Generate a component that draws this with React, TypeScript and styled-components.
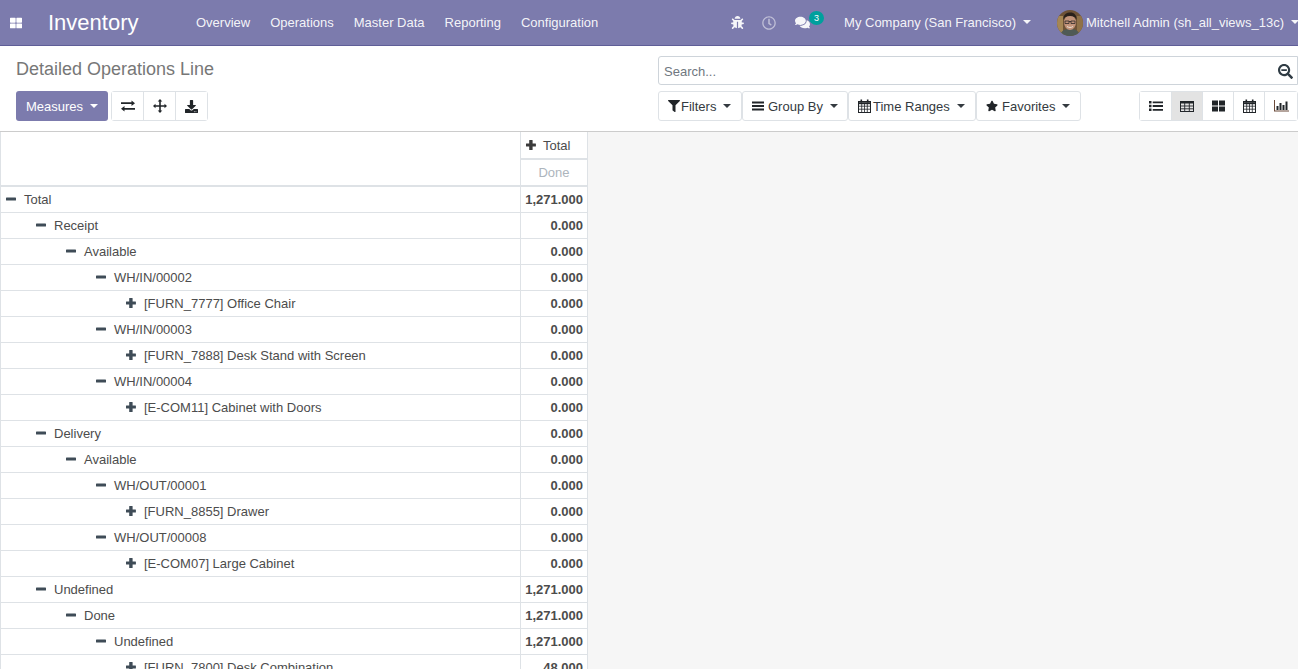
import { createGlobalStyle, styled } from "styled-components";
import type { ReactNode } from "react";
import {
  FaBug,
  FaComments,
  FaDownload,
  FaFilter,
  FaRegClock,
  FaSearchMinus,
  FaStar,
  FaThLarge,
} from "react-icons/fa";

const GlobalStyle = createGlobalStyle`
  html, body {
    margin: 0;
    height: 100%;
    overflow: hidden;
  }
  body {
    font-family: "Liberation Sans", Arial, sans-serif;
    font-size: 13px;
    color: #4c4c4c;
    background: #f6f6f6;
  }
`;

const Page = styled.div`
  display: flex;
  flex-direction: column;
  height: 669px;
  overflow: hidden;
`;

const Navbar = styled.header`
  display: flex;
  align-items: center;
  height: 45px;
  flex: none;
  background: #7c7bad;
  border-bottom: 1px solid #5f5e97;
  color: #fff;
  white-space: nowrap;
`;

const AppsToggle = styled.span`
  display: flex;
  width: 48px;
  padding-left: 10px;
  box-sizing: border-box;
  font-size: 12px;
`;

const Brand = styled.span`
  font-size: 22px;
  width: 148px;
`;

const Menu = styled.nav`
  display: flex;
  gap: 20px;
  flex: 1;
  color: rgba(255, 255, 255, 0.93);
`;

const Systray = styled.div`
  display: flex;
  align-items: center;
  color: rgba(255, 255, 255, 0.93);
`;

const TrayIcon = styled.span<{ $muted?: boolean; $gap: number; $size: number }>`
  display: flex;
  font-size: ${(p) => p.$size}px;
  margin-right: ${(p) => p.$gap}px;
  opacity: ${(p) => (p.$muted ? 0.55 : 1)};
`;

const ChatIcon = styled.span`
  position: relative;
  display: flex;
  font-size: 15px;
  margin-right: 34px;
`;

const Badge = styled.span`
  position: absolute;
  left: 14px;
  top: -4px;
  width: 15px;
  height: 14px;
  border-radius: 50%;
  background: #00a09d;
  color: #fff;
  font-size: 9px;
  line-height: 14px;
  text-align: center;
`;

const Caret = styled.span`
  display: inline-block;
  margin-left: 7px;
  vertical-align: 3px;
  border-top: 4px solid currentColor;
  border-left: 4px solid transparent;
  border-right: 4px solid transparent;
`;

const Company = styled.span`
  margin-right: 26px;
`;

const User = styled.span`
  display: flex;
  align-items: center;
  gap: 3px;
  margin-right: -1px;
`;

const Avatar = styled.svg`
  width: 26px;
  height: 26px;
  flex: none;
`;

const ControlPanel = styled.section`
  display: grid;
  grid-template-columns: 658px 640px;
  grid-template-rows: 35px 40px;
  height: 86px;
  flex: none;
  box-sizing: border-box;
  padding-top: 10px;
  background: #fff;
  border-bottom: 1px solid #cccccc;
`;

const Breadcrumb = styled.h1`
  margin: 0;
  padding: 3px 0 0 16px;
  font-size: 18px;
  line-height: 20px;
  font-weight: 400;
  color: #777777;
`;

const SearchBox = styled.div`
  display: flex;
  align-items: center;
  justify-content: space-between;
  height: 29px;
  box-sizing: border-box;
  padding: 2px 4px 0 5px;
  border: 1px solid #ced4da;
  border-radius: 3px 0 0 3px;
  color: #6f7780;
`;

const SearchIcon = styled.span`
  display: flex;
  font-size: 15px;
  color: #2f3b44;
`;

const LeftTools = styled.div`
  display: flex;
  align-items: flex-start;
  padding-left: 16px;
`;

const PrimaryButton = styled.button`
  height: 30px;
  width: 92px;
  margin-right: 3px;
  padding: 0;
  border: 0;
  border-radius: 3px;
  background: #7c7bad;
  color: #fff;
  font: inherit;
`;

const ButtonGroup = styled.div`
  display: flex;
  height: 30px;
  box-sizing: border-box;
  border: 1px solid #dee2e6;
  border-radius: 3px;
`;

const IconButton = styled.span<{ $active?: boolean; $size?: number }>`
  display: flex;
  align-items: center;
  justify-content: center;
  width: 31px;
  font-size: ${(p) => p.$size ?? 13}px;
  color: #212529;
  background: ${(p) => (p.$active ? "#e3e3e3" : "#fff")};
  & + & {
    border-left: 1px solid #dee2e6;
  }
`;

const ViewButton = styled(IconButton)`
  width: 30px;
  &:first-child {
    width: 31px;
  }
  &:last-child {
    width: 32px;
  }
`;

const RightTools = styled.div`
  display: flex;
  align-items: flex-start;
  justify-content: space-between;
`;

const Filters = styled.div`
  display: flex;
`;

const FilterButton = styled.span<{ $width: number }>`
  display: flex;
  align-items: center;
  width: ${(p) => p.$width}px;
  height: 30px;
  box-sizing: border-box;
  padding-left: 9px;
  border: 1px solid #dee2e6;
  border-radius: 3px;
  color: #343a40;
  background: #fff;
  white-space: nowrap;
`;

const FilterIcon = styled.span<{ $slot: number }>`
  display: flex;
  flex: none;
  width: ${(p) => p.$slot}px;
  font-size: 12px;
  color: #212529;
`;

const TableArea = styled.main`
  flex: 1;
  overflow: hidden;
`;

const Pivot = styled.table`
  border-collapse: collapse;
  table-layout: fixed;
  width: 587px;
  background: #fff;
`;

const Cell = styled.td`
  height: 26px;
  padding: 0 4px;
  border: 1px solid #dee2e6;
  line-height: 15px;
  box-sizing: border-box;
`;

const HeadBlank = styled(Cell).attrs({ as: "th" })`
  border-top: 0;
  border-bottom-width: 2px;
`;

const HeadTotal = styled(Cell).attrs({ as: "th" })`
  height: 27px;
  font-weight: 400;
  text-align: left;
  border-top: 0;
  border-bottom-width: 2px;
`;

const HeadMeasure = styled(HeadTotal)`
  text-align: center;
  color: #adb5bd;
`;

const LabelCell = styled(Cell)<{ $depth: number }>`
  padding-left: ${(p) => 4 + p.$depth * 30}px;
`;

const ValueCell = styled(Cell)`
  text-align: right;
  font-weight: 700;
`;

const Toggle = styled.span`
  display: inline-flex;
  width: 19px;
  color: #3f4c57;
  vertical-align: -1px;
`;

const HeadToggle = styled(Toggle)`
  width: 18px;
  color: #3b3b3b;
`;

const PlusIcon = () => (
  <svg width="12" height="12" viewBox="0 0 12 12" fill="currentColor">
    <path d="M4.500 1h2.800a.3.3 0 0 1 .3.3v3.100h2.900a.4.4 0 0 1 .4.400v2.400a.4.4 0 0 1-.4.400H7.600v3.100a.3.300 0 0 1-.3.300H4.500a.3.300 0 0 1-.3-.3V7.600H1.400a.4.400 0 0 1-.4-.4V4.800a.4.400 0 0 1 .4-.4h2.800V1.300a.3.300 0 0 1 .3-.3z" />
  </svg>
);

const MinusIcon = () => (
  <svg width="12" height="12" viewBox="0 0 12 12" fill="currentColor">
    <rect x="1" y="4.500" width="10" height="3" rx="0.6" />
  </svg>
);

const BarsIcon = () => (
  <svg width="12" height="12" viewBox="0 0 12 12" fill="currentColor">
    <path d="M0 1.500h12v2H0zM0 5h12v2H0zM0 8.500h12v2H0z" />
  </svg>
);

const ListIcon = () => (
  <svg width="14" height="12" viewBox="0 0 14 12" fill="currentColor">
    <path d="M0 1h2.500v2.500H0zM0 4.800h2.500v2.500H0zM0 8.600h2.500v2.500H0zM3.700 1.400H14v1.900H3.700zM3.700 5.100H14V7H3.700zM3.700 8.900H14v1.900H3.700z" />
  </svg>
);

const TableIcon = () => (
  <svg width="14" height="12" viewBox="0 0 14 12" fill="none" stroke="currentColor">
    <rect x="0.500" y="1.500" width="13" height="10" strokeWidth="1" />
    <path d="M0 2.500h14" strokeWidth="2" />
    <path d="M0 6h14M0 8.800h14M4.700 3v8M9.300 3v8" strokeWidth="0.9" />
  </svg>
);

const GridIcon = () => (
  <svg width="13" height="12" viewBox="0 0 13 12" fill="currentColor">
    <path d="M0 .5h6v5H0zM7 .5h6v5H7zM0 6.500h6v5H0zM7 6.500h6v5H7z" />
  </svg>
);

const CalendarIcon = () => (
  <svg width="13" height="14" viewBox="0 0 13 14" fill="none" stroke="currentColor">
    <rect x="0.500" y="2.500" width="12" height="11" strokeWidth="1" />
    <path d="M0 4.200h13" strokeWidth="2" />
    <path d="M0 7.200h13M0 10.200h13M3.700 5v8M6.500 5v8M9.300 5v8" strokeWidth="0.8" />
    <path d="M3.300.500v3M9.700.500v3" strokeWidth="1.600" />
  </svg>
);

const ChartIcon = () => (
  <svg width="15" height="12" viewBox="0 0 15 12" fill="currentColor">
    <path d="M0 0h1v10.500h15v1H0z" fill="#6b4a3a" />
    <path d="M2.500 6h2v4h-2zM5.500 3h2v7h-2zM8.500 5h2v5h-2zM11.500 1.500h2V10h-2z" />
  </svg>
);

const ExchangeIcon = () => (
  <svg width="14" height="12" viewBox="0 0 14 12" fill="currentColor">
    <path d="M0 2.300h10.500V.5L14 3.200l-3.500 2.700V4.100H0zM14 7.900H3.500V6.100L0 8.800l3.500 2.700V9.700H14z" />
  </svg>
);

const MoveIcon = () => (
  <svg width="14" height="14" viewBox="0 0 14 14" fill="currentColor">
    <path d="M7 0l2.300 2.500H7.800v3.700h3.700V4.700L14 7l-2.500 2.300V7.800H7.800v3.700h1.500L7 14l-2.300-2.500h1.500V7.800H2.500v1.500L0 7l2.500-2.300v1.500h3.700V2.500H4.700z" />
  </svg>
);

type Row = { depth: number; open: boolean; label: string; value: string };

const rows: Row[] = [
  { depth: 0, open: true, label: "Total", value: "1,271.000" },
  { depth: 1, open: true, label: "Receipt", value: "0.000" },
  { depth: 2, open: true, label: "Available", value: "0.000" },
  { depth: 3, open: true, label: "WH/IN/00002", value: "0.000" },
  { depth: 4, open: false, label: "[FURN_7777] Office Chair", value: "0.000" },
  { depth: 3, open: true, label: "WH/IN/00003", value: "0.000" },
  { depth: 4, open: false, label: "[FURN_7888] Desk Stand with Screen", value: "0.000" },
  { depth: 3, open: true, label: "WH/IN/00004", value: "0.000" },
  { depth: 4, open: false, label: "[E-COM11] Cabinet with Doors", value: "0.000" },
  { depth: 1, open: true, label: "Delivery", value: "0.000" },
  { depth: 2, open: true, label: "Available", value: "0.000" },
  { depth: 3, open: true, label: "WH/OUT/00001", value: "0.000" },
  { depth: 4, open: false, label: "[FURN_8855] Drawer", value: "0.000" },
  { depth: 3, open: true, label: "WH/OUT/00008", value: "0.000" },
  { depth: 4, open: false, label: "[E-COM07] Large Cabinet", value: "0.000" },
  { depth: 1, open: true, label: "Undefined", value: "1,271.000" },
  { depth: 2, open: true, label: "Done", value: "1,271.000" },
  { depth: 3, open: true, label: "Undefined", value: "1,271.000" },
  { depth: 4, open: false, label: "[FURN_7800] Desk Combination", value: "48.000" },
];

const menuItems = ["Overview", "Operations", "Master Data", "Reporting", "Configuration"];

function Filter({ width, slot, icon, label }: { width: number; slot: number; icon: ReactNode; label: string }) {
  return (
    <FilterButton $width={width}>
      <FilterIcon $slot={slot}>{icon}</FilterIcon>
      {label}
      <Caret />
    </FilterButton>
  );
}

export default function App() {
  return (
    <Page>
      <GlobalStyle />
      <Navbar>
        <AppsToggle>
          <FaThLarge />
        </AppsToggle>
        <Brand>Inventory</Brand>
        <Menu>
          {menuItems.map((item) => (
            <span key={item}>{item}</span>
          ))}
        </Menu>
        <Systray>
          <TrayIcon $gap={18} $size={13}>
            <FaBug />
          </TrayIcon>
          <TrayIcon $gap={19} $size={14} $muted>
            <FaRegClock />
          </TrayIcon>
          <ChatIcon>
            <FaComments />
            <Badge>3</Badge>
          </ChatIcon>
          <Company>
            My Company (San Francisco)
            <Caret />
          </Company>
          <User>
            <Avatar viewBox="0 0 26 26">
              <defs>
                <clipPath id="avatar-clip">
                  <circle cx="13" cy="13" r="13" />
                </clipPath>
              </defs>
              <g clipPath="url(#avatar-clip)">
                <rect width="26" height="26" fill="#6e5236" />
                <rect x="0" y="6" width="6" height="20" fill="#a58655" />
                <rect x="20" y="6" width="6" height="20" fill="#8f7148" />
                <path d="M3 26c1-6 5-7 10-7s9 1 10 7z" fill="#4f5a55" />
                <ellipse cx="13" cy="12.500" rx="6" ry="7.500" fill="#c2937a" />
                <path d="M6.500 10C6 4 10 2.500 13.500 2.500S20 5 19.500 10c-1-3-3-4-6.500-4S7.500 7 6.500 10z" fill="#2a211b" />
                <path d="M8 11h4v2.500H8zM14 11h4v2.500h-4zM12 11.500h2" fill="none" stroke="#2e2a28" strokeWidth="0.8" />
                <path d="M10 16.500c2 1.300 4 1.300 6 0" fill="none" stroke="#f0e6dc" strokeWidth="0.9" />
              </g>
            </Avatar>
            <span>
              Mitchell Admin (sh_all_views_13c)
              <Caret />
            </span>
          </User>
        </Systray>
      </Navbar>

      <ControlPanel>
        <Breadcrumb>Detailed Operations Line</Breadcrumb>
        <SearchBox>
          Search...
          <SearchIcon>
            <FaSearchMinus />
          </SearchIcon>
        </SearchBox>
        <LeftTools>
          <PrimaryButton>
            Measures
            <Caret />
          </PrimaryButton>
          <ButtonGroup>
            <IconButton>
              <ExchangeIcon />
            </IconButton>
            <IconButton>
              <MoveIcon />
            </IconButton>
            <IconButton>
              <FaDownload />
            </IconButton>
          </ButtonGroup>
        </LeftTools>
        <RightTools>
          <Filters>
            <Filter width={84} slot={13} icon={<FaFilter />} label="Filters" />
            <Filter width={106} slot={16} icon={<BarsIcon />} label="Group By" />
            <Filter width={128} slot={15} icon={<CalendarIcon />} label="Time Ranges" />
            <Filter width={105} slot={16} icon={<FaStar />} label="Favorites" />
          </Filters>
          <ButtonGroup>
            <ViewButton>
              <ListIcon />
            </ViewButton>
            <ViewButton $active>
              <TableIcon />
            </ViewButton>
            <ViewButton>
              <GridIcon />
            </ViewButton>
            <ViewButton>
              <CalendarIcon />
            </ViewButton>
            <ViewButton>
              <ChartIcon />
            </ViewButton>
          </ButtonGroup>
        </RightTools>
      </ControlPanel>

      <TableArea>
        <Pivot>
          <colgroup>
            <col style={{ width: 520 }} />
            <col style={{ width: 67 }} />
          </colgroup>
          <thead>
            <tr>
              <HeadBlank rowSpan={2} />
              <HeadTotal>
                <HeadToggle>
                  <PlusIcon />
                </HeadToggle>
                Total
              </HeadTotal>
            </tr>
            <tr>
              <HeadMeasure>Done</HeadMeasure>
            </tr>
          </thead>
          <tbody>
            {rows.map((row, i) => (
              <tr key={i}>
                <LabelCell $depth={row.depth}>
                  <Toggle>{row.open ? <MinusIcon /> : <PlusIcon />}</Toggle>
                  {row.label}
                </LabelCell>
                <ValueCell>{row.value}</ValueCell>
              </tr>
            ))}
          </tbody>
        </Pivot>
      </TableArea>
    </Page>
  );
}
